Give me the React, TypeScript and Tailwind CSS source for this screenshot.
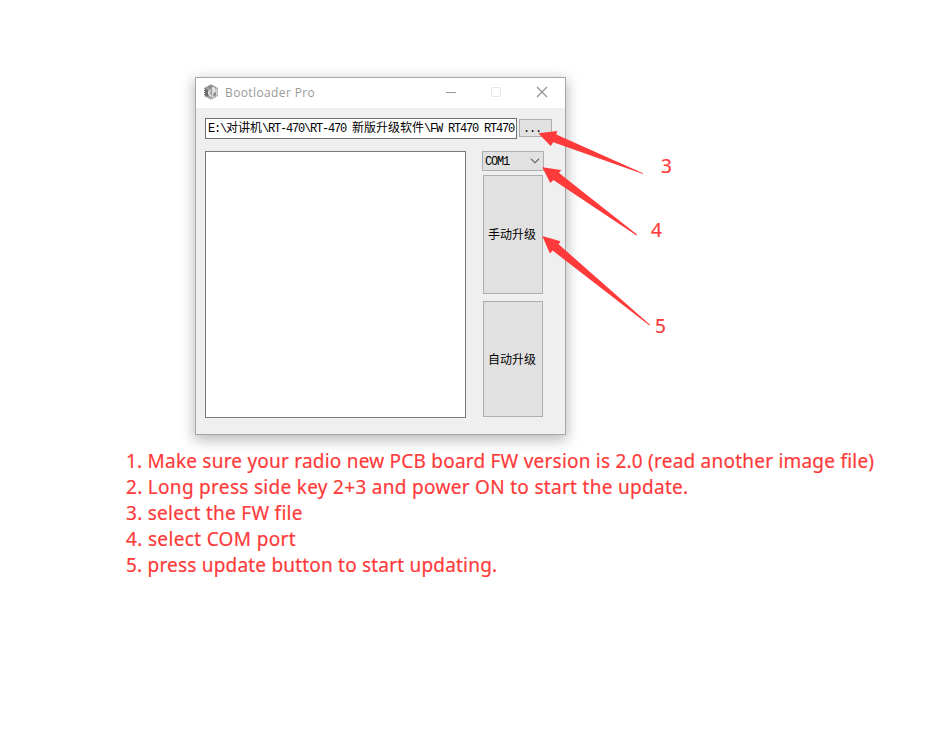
const steps = [
  { text: "1. Make sure your radio new PCB board FW version is 2.0 (read another image file)", cls: "tracking-[0.222px]" },
  { text: "2. Long press side key 2+3 and power ON to start the update.", cls: "tracking-[0.3px]" },
  { text: "3. select the FW file", cls: "tracking-[0.27px]" },
  { text: "4. select COM port", cls: "tracking-[0.34px]" },
  { text: "5. press update button to start updating.", cls: "tracking-[0.2px]" },
];

const mono = "font-['Liberation_Mono','Noto_Sans_CJK_SC',monospace] text-[12px] tracking-[-1.2px]";
const cjk = "font-['Noto_Sans_CJK_SC',sans-serif] text-[12px] tracking-normal";
const note = "font-['Noto_Sans',sans-serif] text-[19px] leading-[26px] text-[#fe3a3a] [-webkit-text-stroke:0.2px_#fe3a3a]";

function AppIcon() {
  return (
    <svg width="14" height="16" viewBox="0 0 14 16" className="block">
      <path d="M7 1 13 4v8L7 15 1 12V4Z" fill="#a2a2a2" />
      <path d="M7 1 12.5 4 8.500 6.500 3.500 3Z" fill="#8a8a8a" />
      <path d="M8 7 13 4.500v7L8 14.500Z" fill="#d4d4d4" />
      <path d="M8.500 2.500 11.500 4 9.500 8 7.500 5Z" fill="#e6e6e6" />
      <path d="M9.500 9.500 12 8v3.200L9.500 12.500Z" fill="#858585" />
      <path d="M1 4.500 4 6v6.500L1 11.500Z" fill="#6d6d6d" />
      <path d="M6.500 6 4.500 8.500l2.500 4" fill="none" stroke="#f6f6f6" strokeWidth="1.200" />
      <path d="M0.500 4v8L7 15.300 13.500 12V4L7 0.700Z" fill="none" stroke="#777" strokeWidth="1" strokeDasharray="1 1" />
    </svg>
  );
}

export default function App() {
  return (
    <main className="relative h-[743px] w-[940px] overflow-hidden bg-white pl-[195px] pt-[77px]">
      <section className="flex h-[358px] w-[371px] flex-col border border-[#a6a6a6] bg-[#efefef] shadow-[0_4px_13px_1px_rgba(0,0,0,0.28)]">
        <header className="flex h-[30px] shrink-0 items-center bg-white pb-[2px] pl-2">
          <AppIcon />
          <h1 className="ml-[7px] pt-[2px] font-['Open_Sans',sans-serif] text-[12px] leading-[26px] tracking-[0.38px] text-[#999]">Bootloader Pro</h1>
          <svg width="102" height="12" viewBox="0 0 102 12" className="ml-auto mr-[17px]" fill="none">
            <path d="M0 6.500h10" stroke="#999" />
            <path d="M45.500 1.500h9v9h-9z" stroke="#e8e8e8" />
            <path d="M91 1l10 10M101 1 91 11" stroke="#8f8f8f" strokeWidth="1.100" />
          </svg>
        </header>
        <div className="flex gap-[2px] pl-[9px] pt-[10px]">
          <div className={`h-[21px] w-[312px] overflow-hidden whitespace-pre border border-[#6f7072] bg-white pl-[2px] leading-[16px] text-black ${mono}`}>
            E:\<span className={cjk}>对讲机</span>\RT-470\RT-470 <span className={cjk}>新版升级软件</span>\FW RT470 RT470
          </div>
          <button className={`mt-px h-[18px] w-[33px] border border-[#adadad] bg-[#e1e1e1] pl-[3px] pt-px text-left leading-[16px] text-black ${mono}`}>...</button>
        </div>
        <div className="flex pl-[9px] pt-[12px]">
          <div className="h-[267px] w-[261px] border border-[#7a7a7a] bg-white" />
          <div className="ml-4 flex flex-col">
            <div className={`flex h-5 w-[62px] items-center border border-[#adadad] bg-[#e1e1e1] pl-[2px] text-black ${mono}`}>
              <span className="pt-[2px]">COM1</span>
              <svg width="10" height="6" viewBox="0 0 10 6" className="ml-auto mr-[3px]" fill="none">
                <path d="M1 .8 5 4.800 9 .8" stroke="#555" strokeWidth="1.100" />
              </svg>
            </div>
            <button className={`ml-px mt-1 h-[119px] w-[60px] border border-[#adadad] bg-[#e1e1e1] pb-[2px] pl-[4px] text-left leading-[18px] text-black ${cjk}`}>手动升级</button>
            <button className={`ml-px mt-[7px] h-[116px] w-[60px] border border-[#adadad] bg-[#e1e1e1] pl-[4px] text-left leading-[18px] text-black ${cjk}`}>自动升级</button>
          </div>
        </div>
      </section>
      <ol className={`-ml-[69px] mt-[13px] ${note}`}>
        {steps.map((s) => (
          <li key={s.text} className={`whitespace-nowrap ${s.cls}`}>{s.text}</li>
        ))}
      </ol>
      <svg className="absolute left-0 top-0" width="940" height="743" viewBox="0 0 940 743" fill="#fe3a3a">
        <path d="M538.300 133.300 557.300 131 556.300 134.600 643 173.200 643 174 553.300 142.300 550.700 146Z" />
        <path d="M542.300 167.300 561.200 170 559 172.900 637 234.600 636.500 235.400 553.400 180 550.300 183Z" />
        <path d="M542.300 236 560.500 241.200 558.600 244.300 650 324.700 649.500 325.400 552.600 250.500 549.900 253.500Z" />
      </svg>
      <div className={note}>
        <span className="absolute left-[661px] top-[153px]">3</span>
        <span className="absolute left-[651px] top-[217px]">4</span>
        <span className="absolute left-[655px] top-[313px]">5</span>
      </div>
    </main>
  );
}
